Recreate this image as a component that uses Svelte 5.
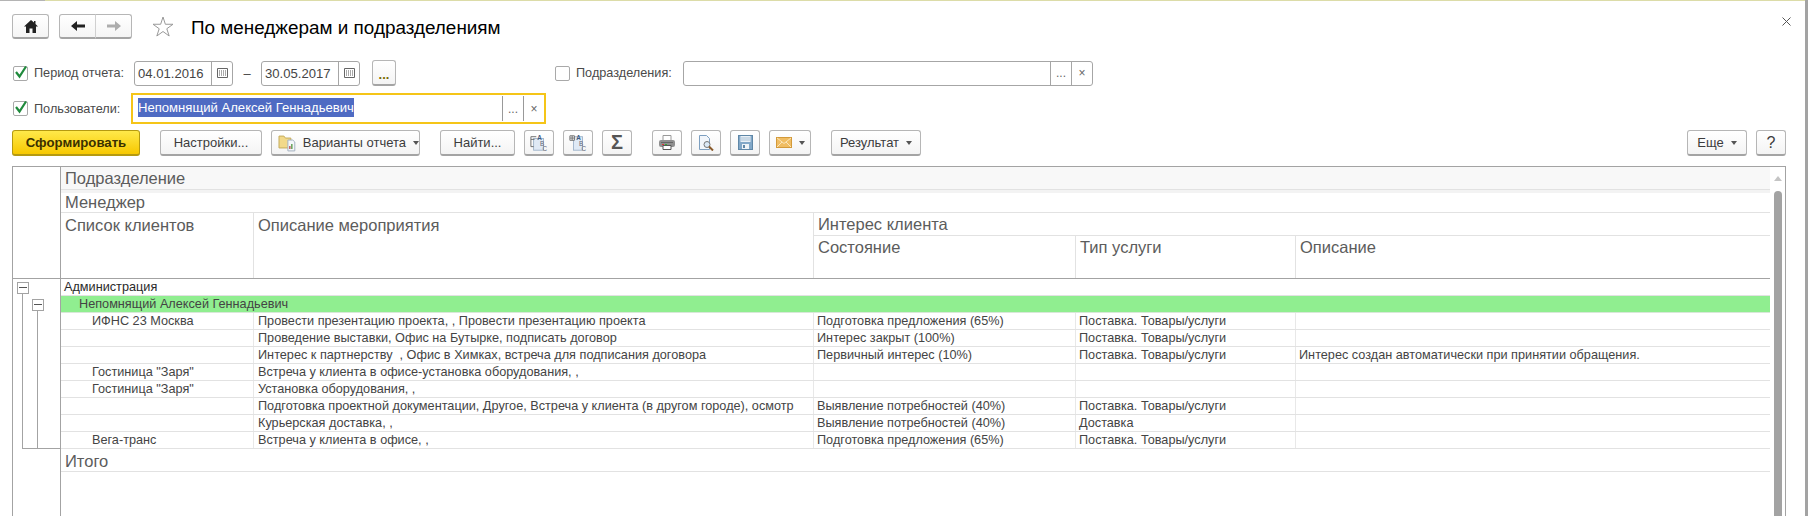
<script lang="ts">
	const rows = [
		{ client: 'ИФНС 23 Москва', event: 'Провести презентацию проекта, , Провести презентацию проекта', state: 'Подготовка предложения (65%)', kind: 'Поставка. Товары/услуги', note: '' },
		{ client: '', event: 'Проведение выставки, Офис на Бутырке, подписать договор', state: 'Интерес закрыт (100%)', kind: 'Поставка. Товары/услуги', note: '' },
		{ client: '', event: 'Интерес к партнерству  , Офис в Химках, встреча для подписания договора', state: 'Первичный интерес (10%)', kind: 'Поставка. Товары/услуги', note: 'Интерес создан автоматически при принятии обращения.' },
		{ client: 'Гостиница "Заря"', event: 'Встреча у клиента в офисе-установка оборудования, ,', state: '', kind: '', note: '' },
		{ client: 'Гостиница "Заря"', event: 'Установка оборудования, ,', state: '', kind: '', note: '' },
		{ client: '', event: 'Подготовка проектной документации, Другое, Встреча у клиента (в другом городе), осмотр', state: 'Выявление потребностей (40%)', kind: 'Поставка. Товары/услуги', note: '' },
		{ client: '', event: 'Курьерская доставка, ,', state: 'Выявление потребностей (40%)', kind: 'Доставка', note: '' },
		{ client: 'Вега-транс', event: 'Встреча у клиента в офисе, ,', state: 'Подготовка предложения (65%)', kind: 'Поставка. Товары/услуги', note: '' }
	];
</script>

<div class="window">
	<div class="topline"></div>
	<header class="titlebar">
		<button class="btn home" aria-label="Домой">
			<svg width="14" height="13" viewBox="0 0 14 13"><path d="M7 0 L0 6.5 H2 V13 H5.5 V8.5 H8.5 V13 H12 V6.5 H14 L11.5 4 V1 H10 V2.5 Z" fill="#222" /></svg>
		</button>
		<div class="nav">
			<button class="btn nav-btn" aria-label="Назад">
				<svg width="14" height="10" viewBox="0 0 14 10"><path d="M6 0 V3.4 H14 V6.6 H6 V10 L0 5 Z" fill="#222" /></svg>
			</button>
			<button class="btn nav-btn" aria-label="Вперед">
				<svg width="14" height="10" viewBox="0 0 14 10"><path d="M8 0 V3.4 H0 V6.6 H8 V10 L14 5 Z" fill="#adadad" /></svg>
			</button>
		</div>
		<svg class="star" width="22" height="21" viewBox="0 0 22 21"><path d="M11 1 L13.35 8.26 H21 L14.8 12.74 L17.17 20 L11 15.5 L4.83 20 L7.2 12.74 L1 8.26 H8.65 Z" fill="#fff" stroke="#999" /></svg>
		<h1>По менеджерам и подразделениям</h1>
		<svg class="close" width="9" height="9" viewBox="0 0 9 9"><path d="M.5 .5 L8.5 8.5 M8.5 .5 L.5 8.5" stroke="#555" /></svg>
	</header>

	<div class="filters">
		<label class="check first"><span class="box on"><svg width="15" height="15" viewBox="0 0 15 15"><path d="M3 7 L6.5 11.5 L13 1.5" fill="none" stroke="#1f8a3c" stroke-width="2.2" /></svg></span>Период отчета:</label>
		<div class="field date"><span class="value">04.01.2016</span><span class="cell cal"><svg width="11" height="10" viewBox="0 0 11 10"><path d="M.5 .5 H10.5 V9.5 H.5 Z" fill="#fff" stroke="#666" /><path d="M2 3 H9 M2 5 H9 M2 7 H9" stroke="#555" stroke-dasharray="1 1" /></svg></span></div>
		<span class="dash">–</span>
		<div class="field date"><span class="value">30.05.2017</span><span class="cell cal"><svg width="11" height="10" viewBox="0 0 11 10"><path d="M.5 .5 H10.5 V9.5 H.5 Z" fill="#fff" stroke="#666" /><path d="M2 3 H9 M2 5 H9 M2 7 H9" stroke="#555" stroke-dasharray="1 1" /></svg></span></div>
		<button class="btn dots">...</button>
		<label class="check dept"><span class="box"></span>Подразделения:</label>
		<div class="field wide"><span class="value"></span><span class="cell more">...</span><span class="cell clear">×</span></div>
	</div>

	<div class="filters second">
		<label class="check first"><span class="box on"><svg width="15" height="15" viewBox="0 0 15 15"><path d="M3 7 L6.5 11.5 L13 1.5" fill="none" stroke="#1f8a3c" stroke-width="2.2" /></svg></span>Пользователи:</label>
		<div class="field focused"><span class="value"><span class="selected">Непомнящий Алексей Геннадьевич</span></span><span class="cell more">...</span><span class="cell clear">×</span></div>
	</div>

	<div class="toolbar">
		<button class="btn primary">Сформировать</button>
		<button class="btn settings">Настройки...</button>
		<button class="btn variants">
			<svg width="20" height="18" viewBox="0 0 20 18"><path d="M1 2 H6 L7.5 4 H13 V14 H1 Z" fill="#f2d98a" stroke="#c4ab5c" /><path d="M10 6 H15 L17 8 V17 H10 Z" fill="#f4f7fb" stroke="#a4b1bf" /><path d="M12 15 V12" stroke="#c0504d" stroke-width="1.4" /><path d="M14 15 V10" stroke="#5a9a4a" stroke-width="1.4" /></svg>
			<span>Варианты отчета</span><i class="caret"></i>
		</button>
		<button class="btn find">Найти...</button>
		<button class="btn icon" aria-label="Развернуть">
			<svg width="18" height="18" viewBox="0 0 20 20"><rect x="4" y="5" width="11" height="13" fill="#dfe9f5" stroke="#9db2c9" /><path d="M1 3 H7 M1 6 H5 M1 3 V14 H4" fill="none" stroke="#666" /><text x="8" y="7" class="glyph">A</text><text x="11" y="13" class="glyph light">B</text><text x="14" y="19" class="glyph light">C</text></svg>
		</button>
		<button class="btn icon" aria-label="Свернуть">
			<svg width="18" height="18" viewBox="0 0 20 20"><rect x="5" y="3" width="10" height="15" fill="#dfe9f5" stroke="#9db2c9" /><path d="M1 2 H6 V7 H1 Z M3.5 2 V7 M1 4.5 H6" fill="#fff" stroke="#666" /><text x="8" y="7" class="glyph">A</text><text x="11" y="13" class="glyph light">B</text><text x="14" y="19" class="glyph light">C</text></svg>
		</button>
		<button class="btn icon sigma">Σ</button>
		<button class="btn icon print" aria-label="Печать">
			<svg width="16" height="15" viewBox="0 0 16 15"><path d="M4 .5 H12 V6 H4 Z" fill="#fff" stroke="#999" /><rect x="0" y="5" width="16" height="7" rx="2" fill="#8f8f8f" /><rect x="2" y="7" width="12" height="1" fill="#666" /><rect x="3" y="9" width="2" height="1" fill="#d33" /><rect x="6" y="9" width="2" height="1" fill="#3a3" /><path d="M4 10.5 H12 V14.5 H4 Z" fill="#fff" stroke="#555" /></svg>
		</button>
		<button class="btn icon" aria-label="Просмотр">
			<svg width="16" height="16" viewBox="0 0 16 16"><path d="M1.5 .5 H8.5 L11.5 3.5 V14.5 H1.5 Z" fill="#f2f6fb" stroke="#7d9fc0" /><circle cx="9" cy="9.5" r="3" fill="#dbe9f6" stroke="#777" /><path d="M11 11.5 L15 15.5" stroke="#8a5a2a" stroke-width="2" /></svg>
		</button>
		<button class="btn icon" aria-label="Сохранить">
			<svg width="15" height="15" viewBox="0 0 15 15"><rect x=".5" y=".5" width="14" height="14" fill="#82a8c8" stroke="#5f87a7" /><rect x="2.5" y="1" width="10" height="6" fill="#e9f0f6" /><path d="M3 3 H12 M3 5 H12" stroke="#a9c1d5" /><rect x="4" y="9" width="7" height="5" fill="#eef3f7" /><rect x="5" y="10" width="2" height="3" fill="#5f87a7" /></svg>
		</button>
		<button class="btn mail" aria-label="Отправить">
			<svg width="16" height="11" viewBox="0 0 16 11"><rect x=".5" y=".5" width="15" height="10" fill="#f0bd63" stroke="#d39a3a" /><path d="M1 1 L8 6.5 L15 1 M1 10 L6 5 M15 10 L10 5" fill="none" stroke="#fbe6bb" /></svg>
			<i class="caret"></i>
		</button>
		<button class="btn result">Результат<i class="caret"></i></button>
		<span class="spacer"></span>
		<button class="btn more-btn">Еще<i class="caret"></i></button>
		<button class="btn help">?</button>
	</div>

	<div class="report">
		<aside class="gutter">
			<div class="tree">
				<span class="node n1"></span>
				<span class="node n2"></span>
			</div>
		</aside>
		<div class="sheet">
			<div class="scroll"><i class="arrow"></i><i class="thumb"></i></div>
			<div class="head-group">Подразделение</div>
			<div class="head-line">Менеджер</div>
			<div class="head-cols">
				<div class="hc c1">Список клиентов</div>
				<div class="hc c2">Описание мероприятия</div>
				<div class="hc c-interest">
					<div class="interest">Интерес клиента</div>
					<div class="sub">
						<div class="hc c3">Состояние</div>
						<div class="hc c4">Тип услуги</div>
						<div class="hc c5">Описание</div>
					</div>
				</div>
			</div>
			<div class="row group">Администрация</div>
			<div class="row manager">Непомнящий Алексей Геннадьевич</div>
			{#each rows as r}
				<div class="row">
					<div class="cell-td c1 client">{r.client}</div>
					<div class="cell-td c2">{r.event}</div>
					<div class="cell-td c3">{r.state}</div>
					<div class="cell-td c4">{r.kind}</div>
					<div class="cell-td c5">{r.note}</div>
				</div>
			{/each}
			<div class="total">Итого</div>
		</div>
	</div>
</div>

<style>
	:global(body) {
		margin: 0;
		background: #fff;
		overflow: hidden;
	}

	.window {
		box-sizing: border-box;
		width: 1810px;
		height: 516px;
		overflow: hidden;
		font-family: "Liberation Sans", Arial, sans-serif;
		font-size: 13px;
		color: #444;
		position: relative;
		padding-right: 5px;
	}

	.window::after {
		content: "";
		position: absolute;
		top: 0;
		right: 2px;
		width: 3px;
		height: 100%;
		background: #a3a3a3;
	}

	.topline {
		height: 1px;
		background: linear-gradient(to right, #b4b4b4 45px, #dcdca8 45px);
	}

	.btn {
		box-sizing: border-box;
		height: 26px;
		padding: 0;
		border: 1px solid #b6b6b6;
		border-bottom: 2px solid #a4a4a4;
		border-radius: 3px;
		background: linear-gradient(#fff, #f4f4f4);
		font-family: inherit;
		font-size: 13px;
		color: #3c3c3c;
		display: inline-flex;
		align-items: center;
		justify-content: center;
		flex: none;
		white-space: nowrap;
	}

	.titlebar {
		display: flex;
		align-items: center;
		height: 25px;
		margin-top: 13px;
		padding-left: 12px;
	}

	.home {
		width: 37px;
		height: 25px;
	}

	.nav {
		display: flex;
		margin-left: 10px;
		width: 74px;
	}

	.nav-btn {
		width: 37px;
		height: 25px;
		border-radius: 3px 0 0 3px;
	}

	.nav-btn + .nav-btn {
		border-radius: 0 3px 3px 0;
		border-left: 1px solid #d0d0d0;
		margin-left: -1px;
	}

	.star {
		margin-left: 19px;
	}

	h1 {
		margin: 2px 0 0 17px;
		font-size: 18.9px;
		font-weight: 400;
		color: #000;
		white-space: nowrap;
	}

	.close {
		margin-left: auto;
		margin-right: 14px;
		margin-top: -10px;
	}

	.filters {
		display: flex;
		align-items: center;
		height: 26px;
		margin-top: 21px;
		padding-left: 13px;
	}

	.second {
		margin-top: 7px;
		height: 31px;
	}

	.check {
		display: flex;
		align-items: center;
		font-size: 12.7px;
		color: #4a4a4a;
		white-space: nowrap;
	}

	.first {
		width: 121px;
		flex: none;
	}

	.second .first {
		width: 118px;
	}

	.box {
		box-sizing: border-box;
		width: 15px;
		height: 15px;
		margin-right: 6px;
		border: 1px solid #a9a9a9;
		border-radius: 2px;
		background: #fff;
		display: block;
		flex: none;
	}

	.box svg {
		display: block;
		margin: -2px 0 0 -1px;
	}

	.field {
		box-sizing: border-box;
		display: flex;
		height: 25px;
		border: 1px solid #a6a6a6;
		border-radius: 3px;
		background: #fff;
		flex: none;
	}

	.value {
		flex: 1;
		padding-left: 3px;
		line-height: 23px;
		font-size: 13.1px;
		color: #444;
		white-space: nowrap;
		overflow: hidden;
	}

	.cell {
		border-left: 1px solid #a6a6a6;
		text-align: center;
		line-height: 23px;
		color: #666;
		flex: none;
		width: 20px;
		font-size: 12px;
	}

	.cal {
		display: flex;
		align-items: center;
		justify-content: center;
	}

	.date {
		width: 99px;
	}

	.dash {
		width: 28px;
		text-align: center;
	}

	.dots {
		margin-left: 12px;
		width: 24px;
		font-weight: 700;
		color: #7a6a00;
		padding-top: 3px;
	}

	.dept {
		margin-left: 159px;
		width: 128px;
		flex: none;
	}

	.wide {
		width: 410px;
	}

	.focused {
		width: 415px;
		height: 31px;
		border: 2px solid #f5c518;
		border-radius: 0;
	}

	.focused .value {
		line-height: 25px;
		padding-left: 5px;
	}

	.focused .cell {
		line-height: 27px;
		margin: 1px 0;
		border-left-color: #999;
	}

	.selected {
		background: #4f6bc3;
		color: #fff;
		padding: 2px 0;
	}

	.toolbar {
		display: flex;
		align-items: center;
		margin-top: 6px;
		padding-left: 12px;
		padding-right: 19px;
		height: 26px;
	}

	.primary {
		width: 128px;
		background: linear-gradient(#ffe94a, #f7c800);
		border-color: #b59a10;
		font-weight: 700;
		color: #3a3000;
		font-size: 13.2px;
	}

	.settings {
		margin-left: 20px;
		width: 102px;
	}

	.variants {
		margin-left: 9px;
		width: 149px;
		justify-content: flex-start;
		padding-left: 6px;
		gap: 5px;
	}

	.variants .caret {
		margin-left: 2px;
	}

	.find {
		margin-left: 20px;
		width: 75px;
	}

	.icon {
		width: 30px;
		margin-left: 9px;
	}

	.glyph {
		font-size: 7px;
		font-weight: 700;
		fill: #3a5a80;
		font-family: "Liberation Sans", sans-serif;
	}

	.glyph.light {
		fill: #667;
		font-weight: 400;
	}

	.sigma {
		font-size: 20px;
		font-weight: 700;
		color: #555;
	}

	.print {
		margin-left: 20px;
	}

	.mail {
		width: 42px;
		margin-left: 9px;
		gap: 0;
	}

	.result {
		width: 90px;
		margin-left: 20px;
	}

	.spacer {
		flex: 1;
	}

	.more-btn {
		width: 60px;
	}

	.help {
		width: 30px;
		margin-left: 9px;
		font-size: 16px;
	}

	.caret {
		display: inline-block;
		margin-left: 7px;
		width: 0;
		height: 0;
		border: 3px solid transparent;
		border-top: 4px solid #555;
		border-bottom: none;
	}

	.report {
		display: flex;
		box-sizing: border-box;
		width: 1774px;
		height: 350px;
		margin: 10px 0 0 12px;
		border: 1px solid #a3a3a3;
		border-bottom: none;
	}

	.gutter {
		width: 47px;
		flex: none;
		border-right: 1px solid #a3a3a3;
		position: relative;
	}

	.gutter::before {
		content: "";
		position: absolute;
		left: 0;
		right: 0;
		top: 111px;
		border-top: 1px solid #a3a3a3;
	}

	.tree {
		position: absolute;
		left: 0;
		top: 112px;
		width: 47px;
		height: 170px;
	}

	.tree::before,
	.tree::after {
		content: "";
		position: absolute;
		bottom: 0;
		border-left: 1px solid #a3a3a3;
		border-bottom: 1px solid #a3a3a3;
	}

	.tree::before {
		left: 9px;
		right: -1px;
		top: 14px;
	}

	.tree::after {
		left: 24px;
		top: 30px;
	}

	.node {
		position: absolute;
		box-sizing: border-box;
		width: 12px;
		height: 12px;
		border: 1px solid #a3a3a3;
		background: #fff;
		z-index: 1;
	}

	.node::after {
		content: "";
		position: absolute;
		left: 1px;
		right: 1px;
		top: 4px;
		border-top: 1px solid #555;
	}

	.n1 {
		left: 4px;
		top: 3px;
	}

	.n2 {
		left: 19px;
		top: 20px;
	}

	.sheet {
		flex: 1;
		min-width: 0;
		padding-right: 15px;
		position: relative;
	}

	.scroll {
		position: absolute;
		right: 0;
		top: 0;
		bottom: 0;
		width: 15px;
	}

	.arrow {
		position: absolute;
		left: 4px;
		top: 9px;
		border: 4px solid transparent;
		border-bottom: 5px solid #c4c4c4;
		border-top: none;
	}

	.thumb {
		position: absolute;
		left: 4px;
		top: 24px;
		bottom: 0;
		width: 8px;
		border-radius: 4px 4px 0 0;
		background: #a3a3a3;
	}

	.head-group {
		height: 22px;
		line-height: 23px;
		background: #f8f8f8;
		border-bottom: 1px solid #e2e2e2;
		font-size: 16.5px;
		color: #5c5c5c;
		padding-left: 4px;
		box-shadow: 0 3px 0 #f3f3f3;
	}

	.head-line {
		box-sizing: border-box;
		height: 23px;
		padding: 3px 0 0 4px;
		line-height: 19px;
		border-bottom: 1px solid #e2e2e2;
		font-size: 16.5px;
		color: #5c5c5c;
	}

	.head-cols {
		display: flex;
		height: 65px;
		border-bottom: 1px solid #a3a3a3;
		font-size: 16.5px;
		color: #5c5c5c;
	}

	.hc {
		box-sizing: border-box;
		padding: 3px 0 0 4px;
		line-height: 19px;
		flex: none;
		border-right: 1px solid #e2e2e2;
	}

	.c1 {
		width: 193px;
	}

	.c2 {
		width: 560px;
	}

	.c3 {
		width: 262px;
	}

	.c4 {
		width: 220px;
	}

	.c5 {
		flex: 1;
		width: auto;
		min-width: 0;
		border-right: none !important;
	}

	.c-interest {
		flex: 1;
		padding: 0;
		border: none;
		display: flex;
		flex-direction: column;
	}

	.interest {
		box-sizing: border-box;
		height: 23px;
		line-height: 23px;
		padding-left: 4px;
		border-bottom: 1px solid #e2e2e2;
	}

	.sub {
		display: flex;
		flex: 1;
	}

	.sub .hc {
		padding-top: 2px;
	}

	.row {
		box-sizing: border-box;
		display: flex;
		height: 17px;
		line-height: 17px;
		border-bottom: 1px solid #e2e2e2;
		font-size: 12.7px;
		color: #444;
	}

	.group {
		padding-left: 3px;
		color: #2a2a2a;
	}

	.manager {
		padding-left: 18px;
		background: #90ee90;
		border-bottom: 1px solid #d8e8d8;
	}

	.cell-td {
		box-sizing: border-box;
		padding-left: 4px;
		flex: none;
		white-space: pre;
		overflow: hidden;
		border-right: 1px solid #e8e8e8;
	}

	.cell-td.c3,
	.cell-td.c4,
	.cell-td.c5 {
		padding-left: 3px;
	}

	.client {
		padding-left: 31px;
	}

	.total {
		box-sizing: border-box;
		height: 23px;
		padding-left: 4px;
		line-height: 25px;
		font-size: 16.5px;
		color: #5c5c5c;
		border-bottom: 1px solid #e2e2e2;
	}
</style>
